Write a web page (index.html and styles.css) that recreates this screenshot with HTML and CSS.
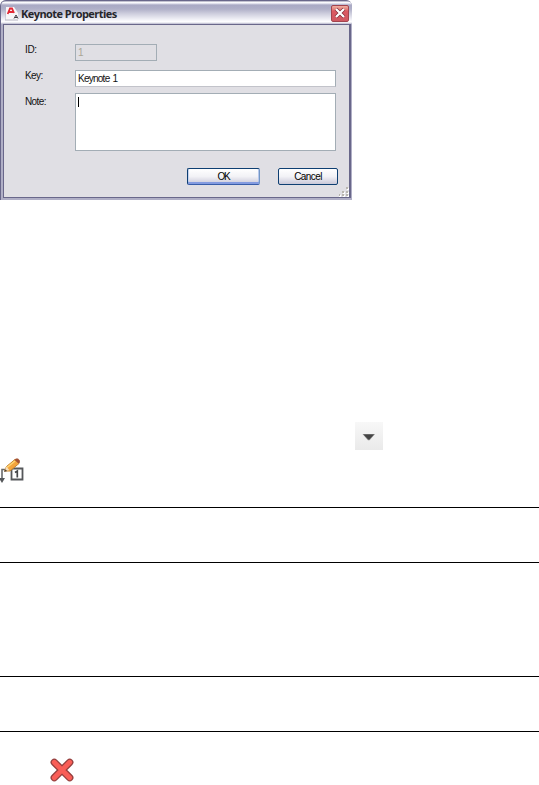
FILE: index.html
```html
<!DOCTYPE html>
<html lang="en">
<head>
<meta charset="utf-8">
<title>Keynote Properties</title>
<link rel="stylesheet" href="styles.css">
</head>
<body>
<section class="dialog">
  <header class="titlebar">
    <svg class="app-icon" width="14" height="14" viewBox="0 0 14 14">
      <path d="M1 0H9L13 6V13H1Z" fill="#f7f5f7"/>
      <path d="M0 2V13H13" fill="none" stroke="#b9b8c3"/>
      <path d="M2.7 7 5 1.5H7L9 6M4 5H8" fill="none" stroke="#e22936" stroke-width="1.8"/>
      <path d="M9 11.5 11 8 13 11.5M10 10.5H12" fill="none" stroke="#454049"/>
    </svg>
    <h1 class="title">Keynote Properties</h1>
    <button class="close" aria-label="Close">
      <svg width="18" height="17" viewBox="0 0 18 17">
        <path d="M5 4 13 12M13 4 5 12" stroke="#7d2935" stroke-width="3.6"/>
        <path d="M5 4 13 12M13 4 5 12" stroke="#fff" stroke-width="2.3"/>
      </svg>
    </button>
  </header>
  <main class="panel">
    <div class="row row-id"><span class="label label-id">ID:</span><div class="field disabled">1</div></div>
    <div class="row row-key"><span class="label label-key">Key:</span><div class="field key">Keynote 1</div></div>
    <div class="row row-note"><span class="label label-note">Note:</span><div class="field note"><i class="caret"></i></div></div>
    <div class="actions">
      <button class="button ok"><span>OK</span></button>
      <button class="button cancel"><span>Cancel</span></button>
    </div>
    <svg class="grip" width="10" height="10" viewBox="0 0 10 10">
      <path d="M8 1h2v2H8zM4 5h2v2H4zM8 5h2v2H8zM0 8h2v2H0zM4 8h2v2H4zM8 8h2v2H8z" fill="#fff"/>
      <path d="M7 0h2v2H7zM3 4h2v2H3zM7 4h2v2H7zM0 7h1v2H0zM3 7h2v2H3zM7 7h2v2H7z" fill="#b9b6b0"/>
    </svg>
  </main>
</section>
<div class="dropdown">
  <svg width="28" height="28" viewBox="0 0 28 28"><path d="M7.5 12H20L14.5 18.3H13Z" fill="#8b8b8b"/><path d="M8.5 12.5H19L14.3 17.5H13.3Z" fill="#444"/></svg>
</div>
<svg class="edit-icon" width="25" height="26" viewBox="0 0 25 26">
  <path d="M6.5 11.5H2V23" fill="none" stroke="#68696b" stroke-width="1.6"/>
  <path d="M-1 20H5L2 25Z" fill="#55575a"/>
  <path d="M11.5 10.5H22.5V21.5H11.5Z" fill="#fff" stroke="#55575a" stroke-width="1.8"/>
  <path d="M15 14.5 17.3 13V19.5" fill="none" stroke="#444649" stroke-width="1.7"/>
  <path d="M4.5 13 6.5 8.5 15 1.5 19 5.5 10 13Z" fill="#f4a43c" stroke="#c4842f"/>
  <path d="M7 9.5 15 3" stroke="#ffd675" stroke-width="1.6"/>
  <path d="M4.5 13 6.4 8.5 9.5 12.3Z" fill="#f5dfbd"/>
  <path d="M4 14 5.2 11.3 7.2 13Z" fill="#514337"/>
  <path d="M14.5 1.8 16 .6 18 .6 20 2.7 19.8 4.2 18.5 5.5Z" fill="#a55332"/>
</svg>
<hr class="rule rule-a">
<hr class="rule rule-b">
<hr class="rule rule-c">
<hr class="rule rule-d">
<svg class="delete-icon" width="24" height="24" viewBox="0 0 24 24">
  <path d="M4.3 4.3 19.7 19.7M19.7 4.3 4.3 19.7" stroke="#943f3e" stroke-width="7.4" stroke-linecap="round"/>
  <path d="M4.3 4.3 19.7 19.7M19.7 4.3 4.3 19.7" stroke="#f95e57" stroke-width="4.8" stroke-linecap="round"/>
</svg>
</body>
</html>
```
FILE: styles.css
```css
* { box-sizing: border-box; }
body { margin: 0; width: 539px; height: 785px; overflow: hidden; background: #fff; }
svg { display: block; }
.dialog {
  width: 352px; height: 200px; padding: 0 1px 2px 2px;
  background: #b0afc6; border-left: 1px solid #69678a;
  border-radius: 6px 6px 0 0; overflow: hidden;
  font-family: "Liberation Sans", sans-serif; font-size: 10px; color: #111;
}
.titlebar {
  display: flex; height: 24px; margin: 0 -1px 0 -2px; padding: 5px 3px 0 4px;
  border-top: 1px solid #69678a; border-radius: 5px 5px 0 0;
  background: linear-gradient(#85839f 0, #fff 1px, #f4f4fa 2px, #a9a9c4 4px, #b0b0c8 8px, #d0d0df 13px, #fafafd 20px, #fff 21px, #b5b4cb 23px);
}
.app-icon { flex: none; margin-top: 1px; }
.title {
  margin: 0 0 0 2px; font: bold 11px/15px "Open Sans", sans-serif;
  letter-spacing: -.55px; color: #26262b; white-space: nowrap;
}
.close {
  margin: -1px 0 0 auto; width: 18px; height: 17px; padding: 0;
  border: 1px solid #a2444e; border-radius: 2px;
  background: linear-gradient(#efb0a3 0, #e4867e 3px, #dc5962 5px, #cf5861 100%);
}
.close svg { margin: -1px; }
.panel {
  position: relative; height: 174px; padding: 19px 0 0 21px;
  background: #e0dfe4; border: 1px solid #69678a; border-right-width: 2px;
}
.row { display: flex; }
.row-id { height: 26px; }
.row-key { height: 23px; }
.row-note { height: 58px; }
.label { width: 50px; line-height: 12px; white-space: nowrap; }
.label-id { letter-spacing: -.4px; }
.label-key, .label-note { letter-spacing: -.6px; }
.label-note { padding-top: 3px; }
.field { width: 261px; height: 17px; padding: 0 2px; line-height: 16px; background: #fff; border: 1px solid #a3adb5; }
.disabled { width: 82px; background: transparent; color: #aaa596; }
.key { letter-spacing: -.75px; word-spacing: 1px; border-bottom-color: #c2c3ca; }
.note { height: 58px; padding: 3px 0 0 2px; }
.caret { display: block; width: 1px; height: 10px; background: #000; }
.actions { display: flex; gap: 18px; margin: 17px 0 0 162px; }
.button {
  height: 17px; padding: 0; border: 1px solid #0e3f72; border-radius: 2px;
  font: 10px/15px "Liberation Sans", sans-serif; color: #000;
  background: linear-gradient(#fff, #f2f2f6 50%, #c9c8d8);
}
.ok { width: 73px; letter-spacing: -1.2px; border-right-color: #7397c6; border-bottom-color: #385da9; box-shadow: inset 0 -2px #839be0, inset -1px 0 #b7c8ec, inset 1px 0 #c5d3ef; }
.cancel { width: 60px; letter-spacing: -.6px; }
.grip { position: absolute; right: 0; bottom: 0; }
.dropdown { width: 28px; height: 28px; margin: 222px 0 0 355px; background: linear-gradient(#f8f8f8, #eaeaea); }
.edit-icon { margin-top: 8px; }
.rule { height: 1px; border: 0; background: #000; }
.rule-a { margin: 23px 0 0; }
.rule-b { margin: 54px 0 0; }
.rule-c { margin: 113px 0 0; }
.rule-d { margin: 54px 0 0; }
.delete-icon { margin: 26px 0 0 50px; }
```
